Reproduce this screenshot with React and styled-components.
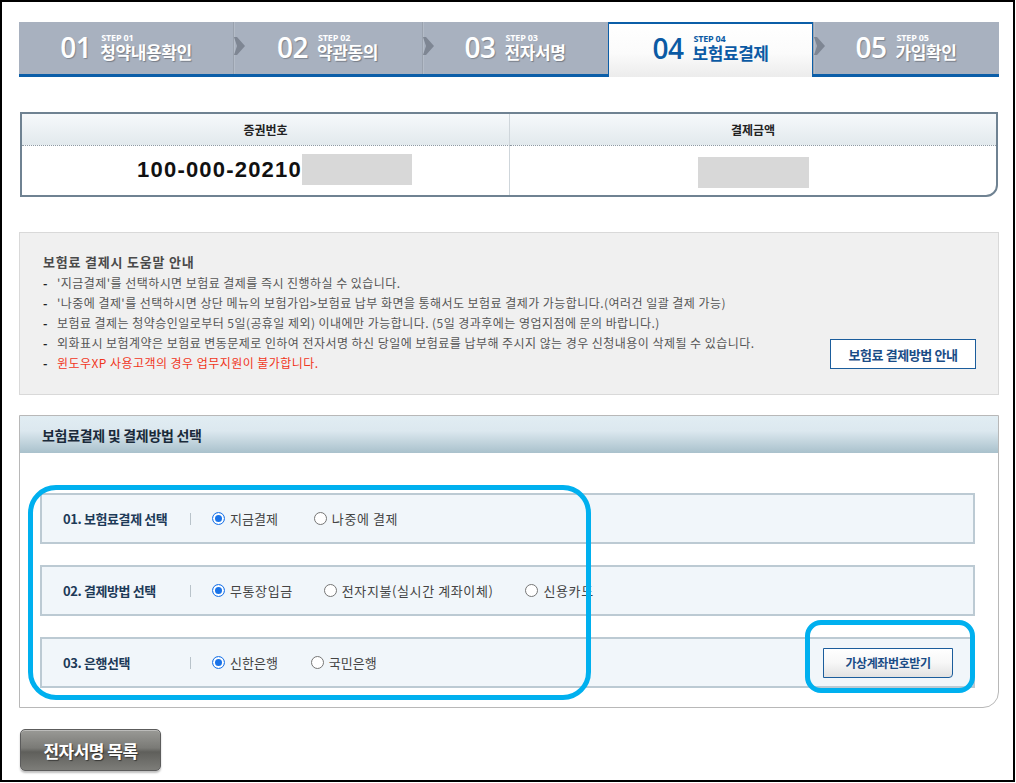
import React from "react";
import styled, { createGlobalStyle, css } from "styled-components";

const Global = createGlobalStyle`
  html, body { margin: 0; padding: 0; background: #fff; }
  body { font-family: "Noto Sans CJK KR", "Noto Sans", sans-serif; }
  * { box-sizing: border-box; }
`;

const KR = `"Noto Sans CJK KR", "Noto Sans", sans-serif`;

const Frame = styled.div`
  width: 1015px;
  height: 782px;
  border: 2px solid #000;
  padding: 20px 14px 0 17px;
  background: #fff;
  font-family: ${KR};
`;

/* ---------- Step bar ---------- */
const StepBar = styled.div`
  display: flex;
  align-items: flex-start;
  height: 55px;
`;

const Step = styled.div`
  position: relative;
  width: ${(p) => p.$w}px;
  height: 55px;
  display: flex;
  align-items: flex-end;
  justify-content: center;
  padding-bottom: 13px;
  background: #a8b1bf;
  border-bottom: 3px solid #0b5ea8;
  color: #fff;
  ${(p) =>
    p.$active &&
    css`
      background: linear-gradient(#ffffff 0%, #fbfbfb 55%, #ececec 100%);
      border: 1px solid #0b5ea8;
      border-bottom: none;
      border-top-width: 2px;
      padding-bottom: 15px;
      color: #0b5aa4;
    `}
`;

const StepNum = styled.span`
  font-family: "Open Sans", "Noto Sans", sans-serif;
  font-weight: 600;
  font-size: 28px;
  line-height: 27px;
  letter-spacing: -0.5px;
  margin-right: 9px;
  text-shadow: ${(p) => (p.$active ? "none" : "1px 1px 1px rgba(0,0,0,0.25)")};
`;

const StepText = styled.span`
  display: flex;
  flex-direction: column;
  align-items: flex-start;
  gap: 1px;
`;

const StepLabel = styled.span`
  font-family: "Open Sans", "Noto Sans", sans-serif;
  font-weight: 700;
  font-size: 9px;
  line-height: 9px;
  letter-spacing: -0.2px;
  margin-left: 1px;
`;

const StepTitle = styled.span`
  font-weight: 700;
  font-size: 17px;
  line-height: 18px;
  letter-spacing: -0.4px;
  text-shadow: ${(p) => (p.$active ? "none" : "1px 1px 1px rgba(0,0,0,0.3)")};
`;

const StepArrow = styled.svg`
  position: absolute;
  left: 0;
  top: 0;
`;

const Arrow = () => (
  <StepArrow width="13" height="52" viewBox="0 0 13 52">
    <rect x="0" y="0" width="1" height="52" fill="#9aa2ae" />
    <rect x="1" y="0" width="1" height="52" fill="#b4bcc8" />
    <polygon points="1,15 4,15 12,24 4,33 1,33 4,24" fill="#7e8693" />
  </StepArrow>
);

/* ---------- Info table ---------- */
const InfoTable = styled.div`
  margin: 35px 1px 0 1px;
  border: 2px solid #6f8292;
  border-bottom-right-radius: 12px;
  display: grid;
  grid-template-columns: 488px 1fr;
  overflow: hidden;
`;

const HeadCell = styled.div`
  height: 32px;
  display: flex;
  align-items: center;
  justify-content: center;
  background: linear-gradient(#f6f9fb, #e2e9ed);
  border-bottom: 1px dotted #8f9aa3;
  border-right: ${(p) => (p.$last ? "none" : "1px solid #cfd6db")};
  font-size: 12px;
  font-weight: 700;
  color: #222;
`;

const BodyCell = styled.div`
  height: 49px;
  display: flex;
  align-items: flex-start;
  justify-content: center;
  padding-top: ${(p) => p.$pt}px;
  padding-left: ${(p) => p.$pl || 0}px;
  border-right: ${(p) => (p.$last ? "none" : "1px solid #cfd6db")};
`;

const PolicyNo = styled.span`
  font-family: "Liberation Sans", Arial, sans-serif;
  font-weight: 700;
  font-size: 22px;
  letter-spacing: 1.2px;
  color: #111;
  line-height: 22px;
  margin-top: 5px;
`;

const Mask = styled.span`
  display: inline-block;
  width: ${(p) => p.$w}px;
  height: 31px;
  background: #d8d8d8;
`;

/* ---------- Help box ---------- */
const HelpBox = styled.div`
  margin-top: 35px;
  height: 163px;
  background: #f0f0f0;
  border: 1px solid #d9d9d9;
  display: flex;
  justify-content: space-between;
  align-items: flex-end;
  padding: 19px 22px 25px 23px;
`;

const HelpText = styled.div`
  align-self: flex-start;
  font-size: 12px;
  color: #555;
  letter-spacing: 0.45px;
`;

const HelpTitle = styled.div`
  font-size: 13px;
  font-weight: 700;
  line-height: 20px;
  color: #4a4a4a;
  letter-spacing: 0.8px;
  margin-bottom: 1px;
`;

const HelpItem = styled.div`
  display: flex;
  line-height: 20px;
  white-space: nowrap;
  color: ${(p) => (p.$red ? "#f0361c" : "#555")};
  &::before {
    content: "-";
    font-weight: 700;
    color: #222;
    width: 14px;
    flex: none;
  }
`;

const OutlineBtn = styled.button`
  font-family: ${KR};
  width: ${(p) => p.$w}px;
  height: ${(p) => p.$h}px;
  border: 1px solid #1b5d9c;
  background: ${(p) => (p.$grad ? "linear-gradient(#ffffff 0%, #f7f7f7 50%, #e2e2e2 100%)" : "#fff")};
  border-bottom-right-radius: ${(p) => (p.$grad ? "4px" : "0")};
  color: #1a4c86;
  font-weight: 700;
  font-size: ${(p) => p.$fs}px;
  letter-spacing: -0.4px;
  padding: 0;
  cursor: pointer;
`;

/* ---------- Payment section ---------- */
const Panel = styled.div`
  position: relative;
  margin-top: 20px;
  border: 1px solid #b8b8b8;
  border-bottom-right-radius: 16px;
`;

const PanelHead = styled.div`
  height: 37px;
  display: flex;
  align-items: center;
  padding-left: 22px;
  background: linear-gradient(#e1edf3 0%, #dce8ef 40%, #a9c1cc 100%);
  font-size: 14px;
  font-weight: 700;
  color: #1a2a3a;
  letter-spacing: -0.3px;
`;

const PanelBody = styled.div`
  display: flex;
  flex-direction: column;
  gap: 21px;
  padding: 40px 23px 19px 20px;
`;

const OptionRow = styled.div`
  height: 51px;
  display: flex;
  align-items: center;
  background: #f1f6fa;
  border: 2px solid #bccad3;
  padding-left: 21px;
  padding-right: 20px;
`;

const RowLabel = styled.span`
  width: 127px;
  font-size: 13px;
  font-weight: 700;
  color: #1d3a58;
  letter-spacing: -0.4px;
`;

const Sep = styled.span`
  width: 1px;
  height: 12px;
  background: #b9c3ca;
  margin-right: 21px;
`;

const Option = styled.label`
  display: flex;
  align-items: center;
  gap: 5px;
  margin-right: ${(p) => p.$mr}px;
  font-size: 13px;
  color: #444;
  letter-spacing: ${(p) => p.$ls || 0}px;
`;

const Radio = styled.span`
  width: 13px;
  height: 13px;
  border-radius: 50%;
  flex: none;
  background: #fff;
  border: 1px solid ${(p) => (p.$checked ? "#1a73e8" : "#767676")};
  box-shadow: ${(p) => (p.$checked ? "inset 0 0 0 2px #fff, inset 0 0 0 6px #1a73e8" : "none")};
`;

const Spacer = styled.span`
  flex: 1;
`;

const Highlight = styled.div`
  position: absolute;
  left: ${(p) => p.$x}px;
  top: ${(p) => p.$y}px;
  width: ${(p) => p.$w}px;
  height: ${(p) => p.$h}px;
  border: 5px solid #00b0ef;
  border-radius: ${(p) => p.$r}px;
  pointer-events: none;
`;

const BottomBar = styled.div`
  margin-top: 21px;
  padding-left: 1px;
`;

const DarkBtn = styled.button`
  width: 141px;
  height: 42px;
  border: 1px solid #5c5c5c;
  border-radius: 5px;
  background: linear-gradient(#9a9a96 0%, #7a7a76 45%, #5f5f5b 55%, #7d7d79 100%);
  box-shadow: 0 2px 2px rgba(0, 0, 0, 0.25), inset 0 1px 0 rgba(255, 255, 255, 0.35);
  color: #fff;
  font-family: ${KR};
  font-weight: 700;
  font-size: 17px;
  letter-spacing: -0.5px;
  text-shadow: 1px 1px 1px rgba(0, 0, 0, 0.5);
  padding: 0;
`;

const steps = [
  { n: "01", label: "STEP 01", title: "청약내용확인", w: 214 },
  { n: "02", label: "STEP 02", title: "약관동의", w: 189 },
  { n: "03", label: "STEP 03", title: "전자서명", w: 186 },
  { n: "04", label: "STEP 04", title: "보험료결제", w: 205, active: true },
  { n: "05", label: "STEP 05", title: "가입확인", w: 186 },
];

const rows = [
  {
    label: "01. 보험료결제 선택",
    options: [
      { t: "지금결제", c: true, mr: 36 },
      { t: "나중에 결제", mr: 0, ls: 0.6 },
    ],
  },
  {
    label: "02. 결제방법 선택",
    options: [
      { t: "무통장입금", c: true, mr: 31, ls: 0.6 },
      { t: "전자지불(실시간 계좌이체)", mr: 32, ls: 0.6 },
      { t: "신용카드", mr: 0, ls: 0.6 },
    ],
  },
  {
    label: "03. 은행선택",
    options: [
      { t: "신한은행", c: true, mr: 33 },
      { t: "국민은행", mr: 0 },
    ],
    button: true,
  },
];

export default function App() {
  return (
    <>
      <Global />
      <Frame>
        <StepBar>
          {steps.map((s, i) => (
            <Step key={s.n} $w={s.w} $active={s.active}>
              {i > 0 && !s.active && <Arrow />}
              <StepNum $active={s.active}>{s.n}</StepNum>
              <StepText>
                <StepLabel>{s.label}</StepLabel>
                <StepTitle $active={s.active}>{s.title}</StepTitle>
              </StepText>
            </Step>
          ))}
        </StepBar>

        <InfoTable>
          <HeadCell>증권번호</HeadCell>
          <HeadCell $last>결제금액</HeadCell>
          <BodyCell $pt={8} $pl={18}>
            <PolicyNo>100-000-20210</PolicyNo>
            <Mask $w={110} />
          </BodyCell>
          <BodyCell $last $pt={11} $pl={0}>
            <Mask $w={111} />
          </BodyCell>
        </InfoTable>

        <HelpBox>
          <HelpText>
            <HelpTitle>보험료 결제시 도움말 안내</HelpTitle>
            <HelpItem>'지금결제'를 선택하시면 보험료 결제를 즉시 진행하실 수 있습니다.</HelpItem>
            <HelpItem>
              '나중에 결제'를 선택하시면 상단 메뉴의 보험가입&gt;보험료 납부 화면을 통해서도 보험료 결제가 가능합니다.(여러건 일괄 결제 가능)
            </HelpItem>
            <HelpItem>
              보험료 결제는 청약승인일로부터 5일(공휴일 제외) 이내에만 가능합니다. (5일 경과후에는 영업지점에 문의 바랍니다.)
            </HelpItem>
            <HelpItem>
              외화표시 보험계약은 보험료 변동문제로 인하여 전자서명 하신 당일에 보험료를 납부해 주시지 않는 경우 신청내용이 삭제될 수 있습니다.
            </HelpItem>
            <HelpItem $red>윈도우XP 사용고객의 경우 업무지원이 불가합니다.</HelpItem>
          </HelpText>
          <OutlineBtn $w={146} $h={30} $fs={13}>
            보험료 결제방법 안내
          </OutlineBtn>
        </HelpBox>

        <Panel>
          <PanelHead>보험료결제 및 결제방법 선택</PanelHead>
          <PanelBody>
            {rows.map((r) => (
              <OptionRow key={r.label}>
                <RowLabel>{r.label}</RowLabel>
                <Sep />
                {r.options.map((o) => (
                  <Option key={o.t} $mr={o.mr} $ls={o.ls}>
                    <Radio $checked={o.c} />
                    {o.t}
                  </Option>
                ))}
                {r.button && (
                  <>
                    <Spacer />
                    <OutlineBtn $w={130} $h={30} $fs={12} $grad>
                      가상계좌번호받기
                    </OutlineBtn>
                  </>
                )}
              </OptionRow>
            ))}
          </PanelBody>
          <Highlight $x={8} $y={69} $w={563} $h={215} $r={28} />
          <Highlight $x={785} $y={204} $w={170} $h={73} $r={16} />
        </Panel>

        <BottomBar>
          <DarkBtn>전자서명 목록</DarkBtn>
        </BottomBar>
      </Frame>
    </>
  );
}
